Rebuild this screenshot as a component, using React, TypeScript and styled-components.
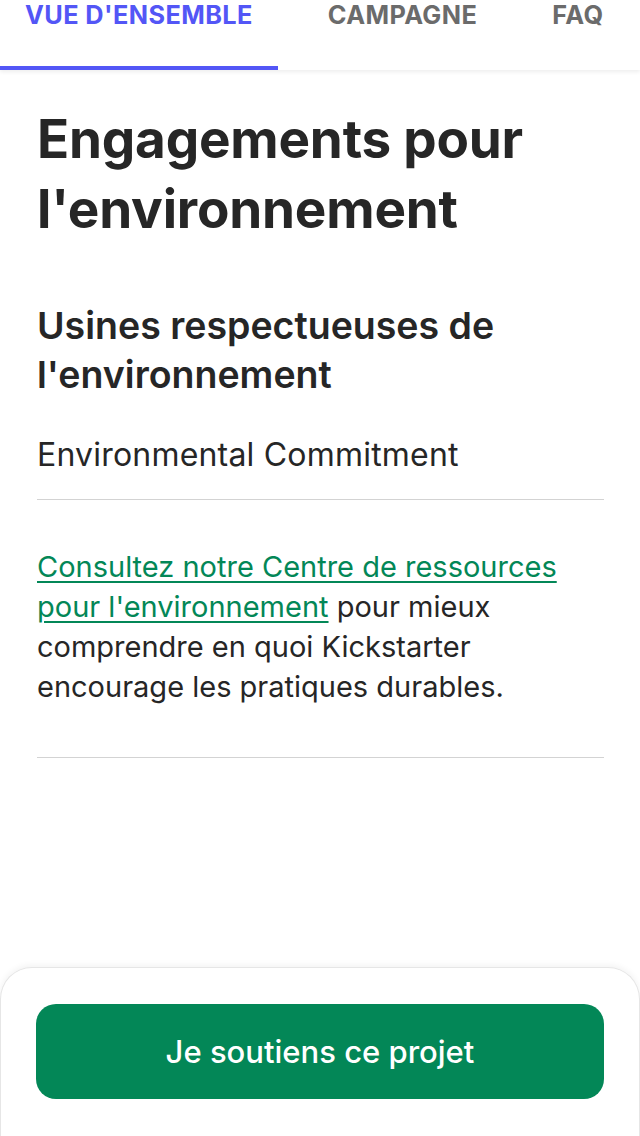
import React from "react";
import styled, { createGlobalStyle } from "styled-components";

const GlobalStyle = createGlobalStyle`
  html, body {
    margin: 0;
    padding: 0;
    background: #ffffff;
  }
  body {
    font-family: Inter, "Noto Sans", sans-serif;
    color: #282828;
    -webkit-font-smoothing: antialiased;
  }
  * { box-sizing: border-box; }
`;

const Page = styled.div`
  min-height: 1136px;
  padding-bottom: 200px;
`;

const TabBar = styled.nav`
  display: flex;
  gap: 25px;
  height: 70px;
  background: #fff;
  box-shadow: 0 2px 4px rgba(0, 0, 0, 0.07);
`;

const Tab = styled.div<{ $active?: boolean }>`
  padding: 0 25px;
  height: 70px;
  font-size: 25.3px;
  line-height: 30px;
  font-weight: 700;
  letter-spacing: 0.4px;
  color: ${(p) => (p.$active ? "#5356f6" : "#6b6b6b")};
  border-bottom: 4px solid ${(p) => (p.$active ? "#5356f6" : "transparent")};
  white-space: nowrap;
`;

const Main = styled.main`
  padding: 34px 36px 0 37px;
`;

const Title = styled.h1`
  margin: 0;
  font-size: 53px;
  line-height: 70px;
  font-weight: 700;
  letter-spacing: -0.2px;
  color: #262626;
`;

const Subtitle = styled.h2`
  margin: 57px 0 0;
  font-size: 37.5px;
  line-height: 49px;
  font-weight: 600;
  color: #262626;
`;

const Lead = styled.p`
  margin: 36px 0 0;
  font-size: 32px;
  line-height: 40px;
  font-weight: 400;
  letter-spacing: 0.2px;
  color: #262626;
`;

const Divider = styled.hr<{ $gap: number }>`
  margin: ${(p) => p.$gap}px 0 0;
  border: 0;
  border-top: 1px solid #d3d3d3;
`;

const Body = styled.p`
  margin: 47px 0 0;
  font-size: 29px;
  line-height: 40px;
  color: #262626;
`;

const Link = styled.a`
  color: #038757;
  text-decoration: underline;
  text-decoration-thickness: 2px;
  text-underline-offset: 4px;
`;

const Sheet = styled.div`
  position: fixed;
  left: 0;
  right: 0;
  bottom: 0;
  height: 169px;
  background: #fff;
  border: 1px solid #e6e6e6;
  border-bottom: 0;
  border-radius: 32px 32px 0 0;
  box-shadow: 0 -2px 6px rgba(0, 0, 0, 0.05);
  padding: 36px 35px 0 35px;
`;

const Button = styled.button`
  display: flex;
  align-items: center;
  justify-content: center;
  width: 100%;
  height: 95px;
  border: 0;
  border-radius: 20px;
  background: #038757;
  color: #fff;
  font-family: Inter, "Noto Sans", sans-serif;
  font-size: 31px;
  font-weight: 500;
  cursor: pointer;
`;

export default function App() {
  return (
    <Page>
      <GlobalStyle />
      <TabBar>
        <Tab $active>VUE D'ENSEMBLE</Tab>
        <Tab>CAMPAGNE</Tab>
        <Tab>FAQ</Tab>
      </TabBar>
      <Main>
        <Title>Engagements pour l'environnement</Title>
        <Subtitle>Usines respectueuses de l'environnement</Subtitle>
        <Lead>Environmental Commitment</Lead>
        <Divider $gap={24} />
        <Body>
          <Link href="#">Consultez notre Centre de ressources pour l'environnement</Link>{" "}
          pour mieux comprendre en quoi Kickstarter encourage les pratiques durables.
        </Body>
        <Divider $gap={50} />
      </Main>
      <Sheet>
        <Button>Je soutiens ce projet</Button>
      </Sheet>
    </Page>
  );
}
